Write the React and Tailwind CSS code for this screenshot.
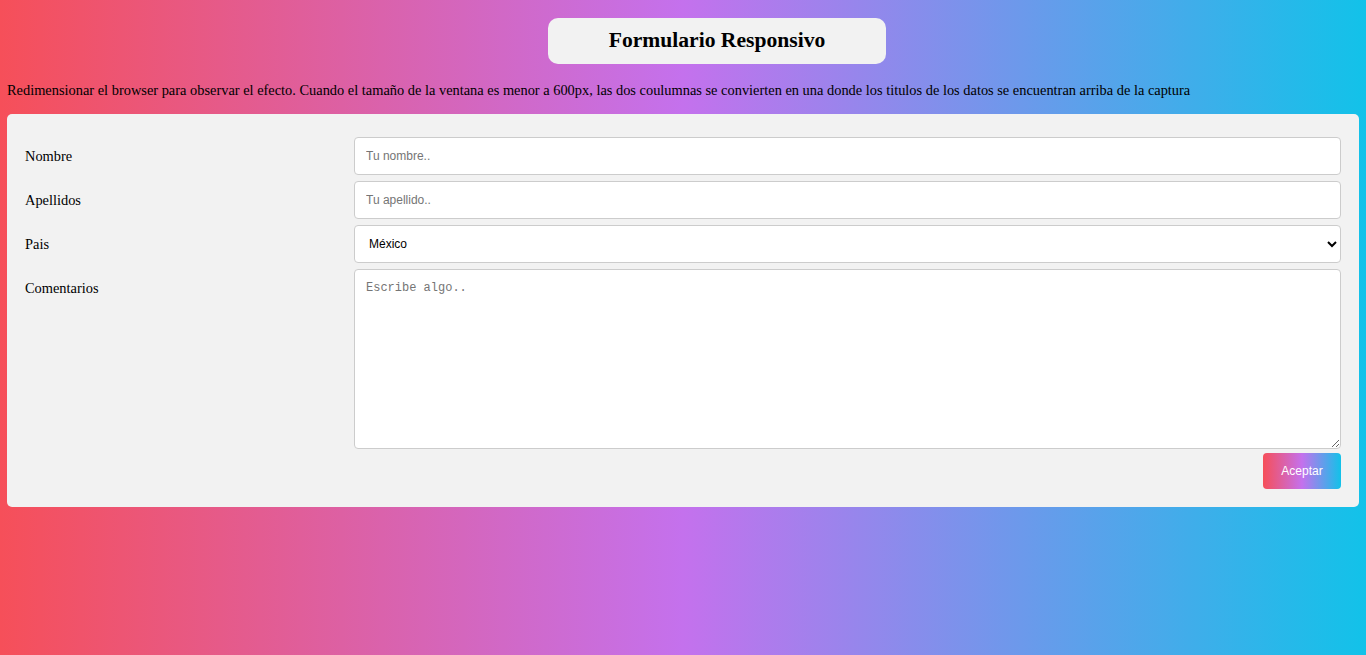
import React from 'react';

const serif = { fontFamily: '"Liberation Serif", "Times New Roman", serif' };

function Row({ label, children }) {
  return (
    <div className="flex">
      <div className="w-1/4 mt-[6px]">
        <label className="inline-block py-[11px] text-[14.4px] leading-[16px] text-black">{label}</label>
      </div>
      <div className="w-3/4 mt-[6px]">{children}</div>
    </div>
  );
}

export default function App() {
  const field =
    'w-full h-[38px] px-[11px] bg-white border border-[#cccccc] rounded-[4px] text-[12px] font-["Liberation_Sans",Arial,sans-serif] placeholder:text-[#757575] outline-none';

  return (
    <div
      className="min-h-[655px] w-full bg-[linear-gradient(to_right,#f64f59,#c471ed,#12c2e9)] px-[7px] pt-[18px] pb-[20px]"
      style={serif}
    >
      <div className="flex">
        <div className="ml-[541px] w-[338px] h-[46px] bg-[#f2f2f2] rounded-[10px] flex items-center justify-center">
          <h2 className="text-[21.6px] font-bold text-black leading-none">Formulario Responsivo</h2>
        </div>
      </div>

      <p className="mt-[18px] text-[14.4px] leading-[16px] text-black whitespace-nowrap">
        Redimensionar el browser para observar el efecto. Cuando el tamaño de la ventana es menor a 600px, las dos coulumnas se convierten en una donde los titulos de los datos se encuentran arriba de la captura
      </p>

      <form
        className="mt-[16px] bg-[#f2f2f2] rounded-[5px] pt-[17px] px-[18px] pb-[18px]"
        onSubmit={(e) => e.preventDefault()}
      >
        <Row label="Nombre">
          <input type="text" placeholder="Tu nombre.." className={field} />
        </Row>
        <Row label="Apellidos">
          <input type="text" placeholder="Tu apellido.." className={field} />
        </Row>
        <Row label="Pais">
          <select
            defaultValue="mexico"
            className="w-full h-[38px] pl-[10px] pr-[6px] bg-white border border-[#cccccc] rounded-[4px] text-[12px] text-black font-['Liberation_Sans',Arial,sans-serif] outline-none"
          >
            <option value="mexico">México</option>
            <option value="canada">Canada</option>
            <option value="usa">USA</option>
          </select>
        </Row>
        <Row label="Comentarios">
          <textarea
            placeholder="Escribe algo.."
            className="block w-full h-[180px] px-[11px] py-[11px] bg-white border border-[#cccccc] rounded-[4px] text-[12px] leading-[14px] font-['Liberation_Mono','Courier_New',monospace] placeholder:text-[#757575] outline-none resize-y"
          />
        </Row>
        <div className="flex justify-end mt-[4px]">
          <button
            type="submit"
            className="w-[78px] h-[36px] rounded-[4px] bg-[linear-gradient(to_right,#f64f59,#c471ed,#12c2e9)] text-white text-[12px] font-['Liberation_Sans',Arial,sans-serif]"
          >
            Aceptar
          </button>
        </div>
      </form>
    </div>
  );
}
